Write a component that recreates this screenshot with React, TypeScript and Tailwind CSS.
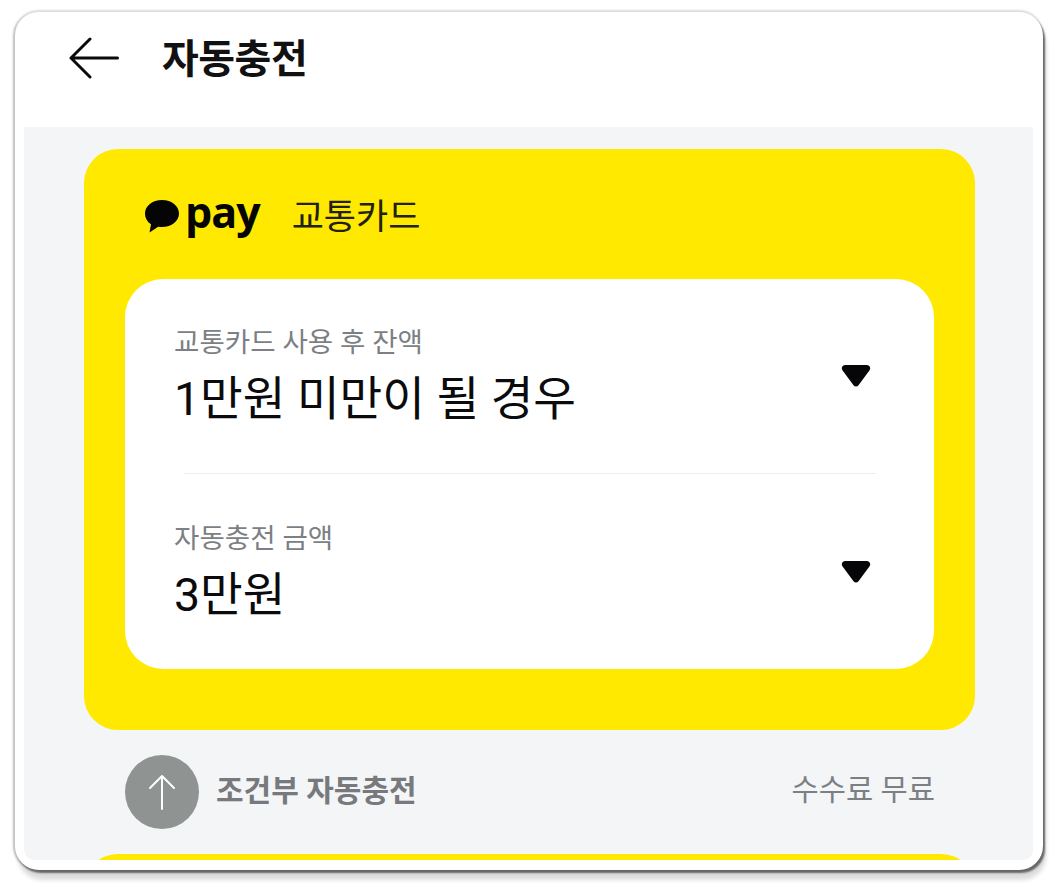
const font = "font-['Roboto','Noto_Sans_CJK_KR',sans-serif]";

function Caret() {
  return (
    <svg width="30" height="22" viewBox="0 0 30 22" className="shrink-0">
      <path d="M4.500 0h21c3.200 0 4.800 3.200 2.900 5.400L17.500 20.200c-1.300 1.600-3.700 1.600-5 0L1.600 5.400C-.3 3.200 1.300 0 4.500 0z" fill="#060608" />
    </svg>
  );
}

function SelectRow({ label, value, height }: { label: string; value: string; height: string }) {
  return (
    <div className={`flex items-start justify-between pl-[49px] pr-[63px] ${height}`}>
      <div className="pt-[2px]">
        <p className="text-[27.6px] leading-[36px] text-[#7c7f83]">{label}</p>
        <p className="mt-[8px] text-[46.400px] leading-[60px] text-[#0b0b0d]">{value}</p>
      </div>
      <div className="mt-[42px]">
        <Caret />
      </div>
    </div>
  );
}

export default function App() {
  return (
    <div className={`h-[887px] w-[1058px] overflow-hidden bg-white pl-[15px] pt-[12px] ${font}`}>
      <div className="h-[858px] w-[1028px] rounded-[24px] bg-white shadow-[2px_3px_2px_#666,0_-2px_2px_#ddd,-2px_0_2px_#bbb,3px_10px_4px_#ddd]">
        <header className="flex h-[115px] items-center pb-[20px] pl-[54px]">
          <svg width="50" height="42" viewBox="0 0 50 42" fill="none" stroke="#0b0b0d" strokeWidth="3" strokeLinecap="round" strokeLinejoin="round" className="mb-[4px]">
            <path d="M48.500 21H2M21 2 2 21l19 19" />
          </svg>
          <h1 className="ml-[43px] text-[40px] font-bold tracking-[-0.5px] text-[#111]">자동충전</h1>
        </header>
        <main className="mx-[9px] h-[733px] w-[1009px] overflow-hidden rounded-b-[10px] bg-[#f3f5f7] pt-[22px]">
          <section className="ml-[60px] h-[581px] w-[891px] rounded-[34px] bg-[#ffe900] px-[41px] pt-[44px]">
            <div className="flex h-[86px] items-start pl-[19px]">
              <svg width="36" height="36" viewBox="0 0 36 36" className="mt-[6px]">
                <path d="M18 1c9.800 0 17 6 17 13.500S27.800 28 18 28c-1.300 0-2.600-.1-3.800-.3L5.500 33.500l1.500-8.300C3 22.800 1 18.900 1 14.500 1 7 8.200 1 18 1z" fill="#050505" />
              </svg>
              <span className="ml-[5px] font-['Open_Sans'] text-[43px] leading-[38px] font-bold tracking-[-1px] text-[#050505]">pay</span>
              <span className="ml-[32px] text-[35px] leading-[50px] text-[#22220c]">교통카드</span>
            </div>
            <div className="h-[390px] w-[809px] rounded-[38px] bg-white pt-[44px]">
              <SelectRow label="교통카드 사용 후 잔액" value="1만원 미만이 될 경우" height="h-[150px]" />
              <div className="ml-[59px] h-px w-[692px] bg-[#eeeeee]" />
              <div className="pt-[45px]">
                <SelectRow label="자동충전 금액" value="3만원" height="h-[120px]" />
              </div>
            </div>
          </section>
          <div className="ml-[101px] mt-[25px] flex w-[810px] items-center justify-between">
            <div className="flex items-center">
              <div className="flex h-[74px] w-[74px] items-center justify-center rounded-full bg-[#8f9391]">
                <svg width="28" height="36" viewBox="0 0 28 36" fill="none" stroke="#fff" strokeWidth="2" strokeLinecap="round" strokeLinejoin="round">
                  <path d="M14 35V2M2 14 14 2l12 12" />
                </svg>
              </div>
              <span className="ml-[17px] pb-[3px] text-[30px] font-bold text-[#77797c]">조건부 자동충전</span>
            </div>
            <span className="pb-[3px] text-[29.600px] text-[#7c7f83]">수수료 무료</span>
          </div>
          <section className="ml-[60px] mt-[25px] h-[60px] w-[891px] rounded-t-[34px] bg-[#ffe900]" />
        </main>
      </div>
    </div>
  );
}
